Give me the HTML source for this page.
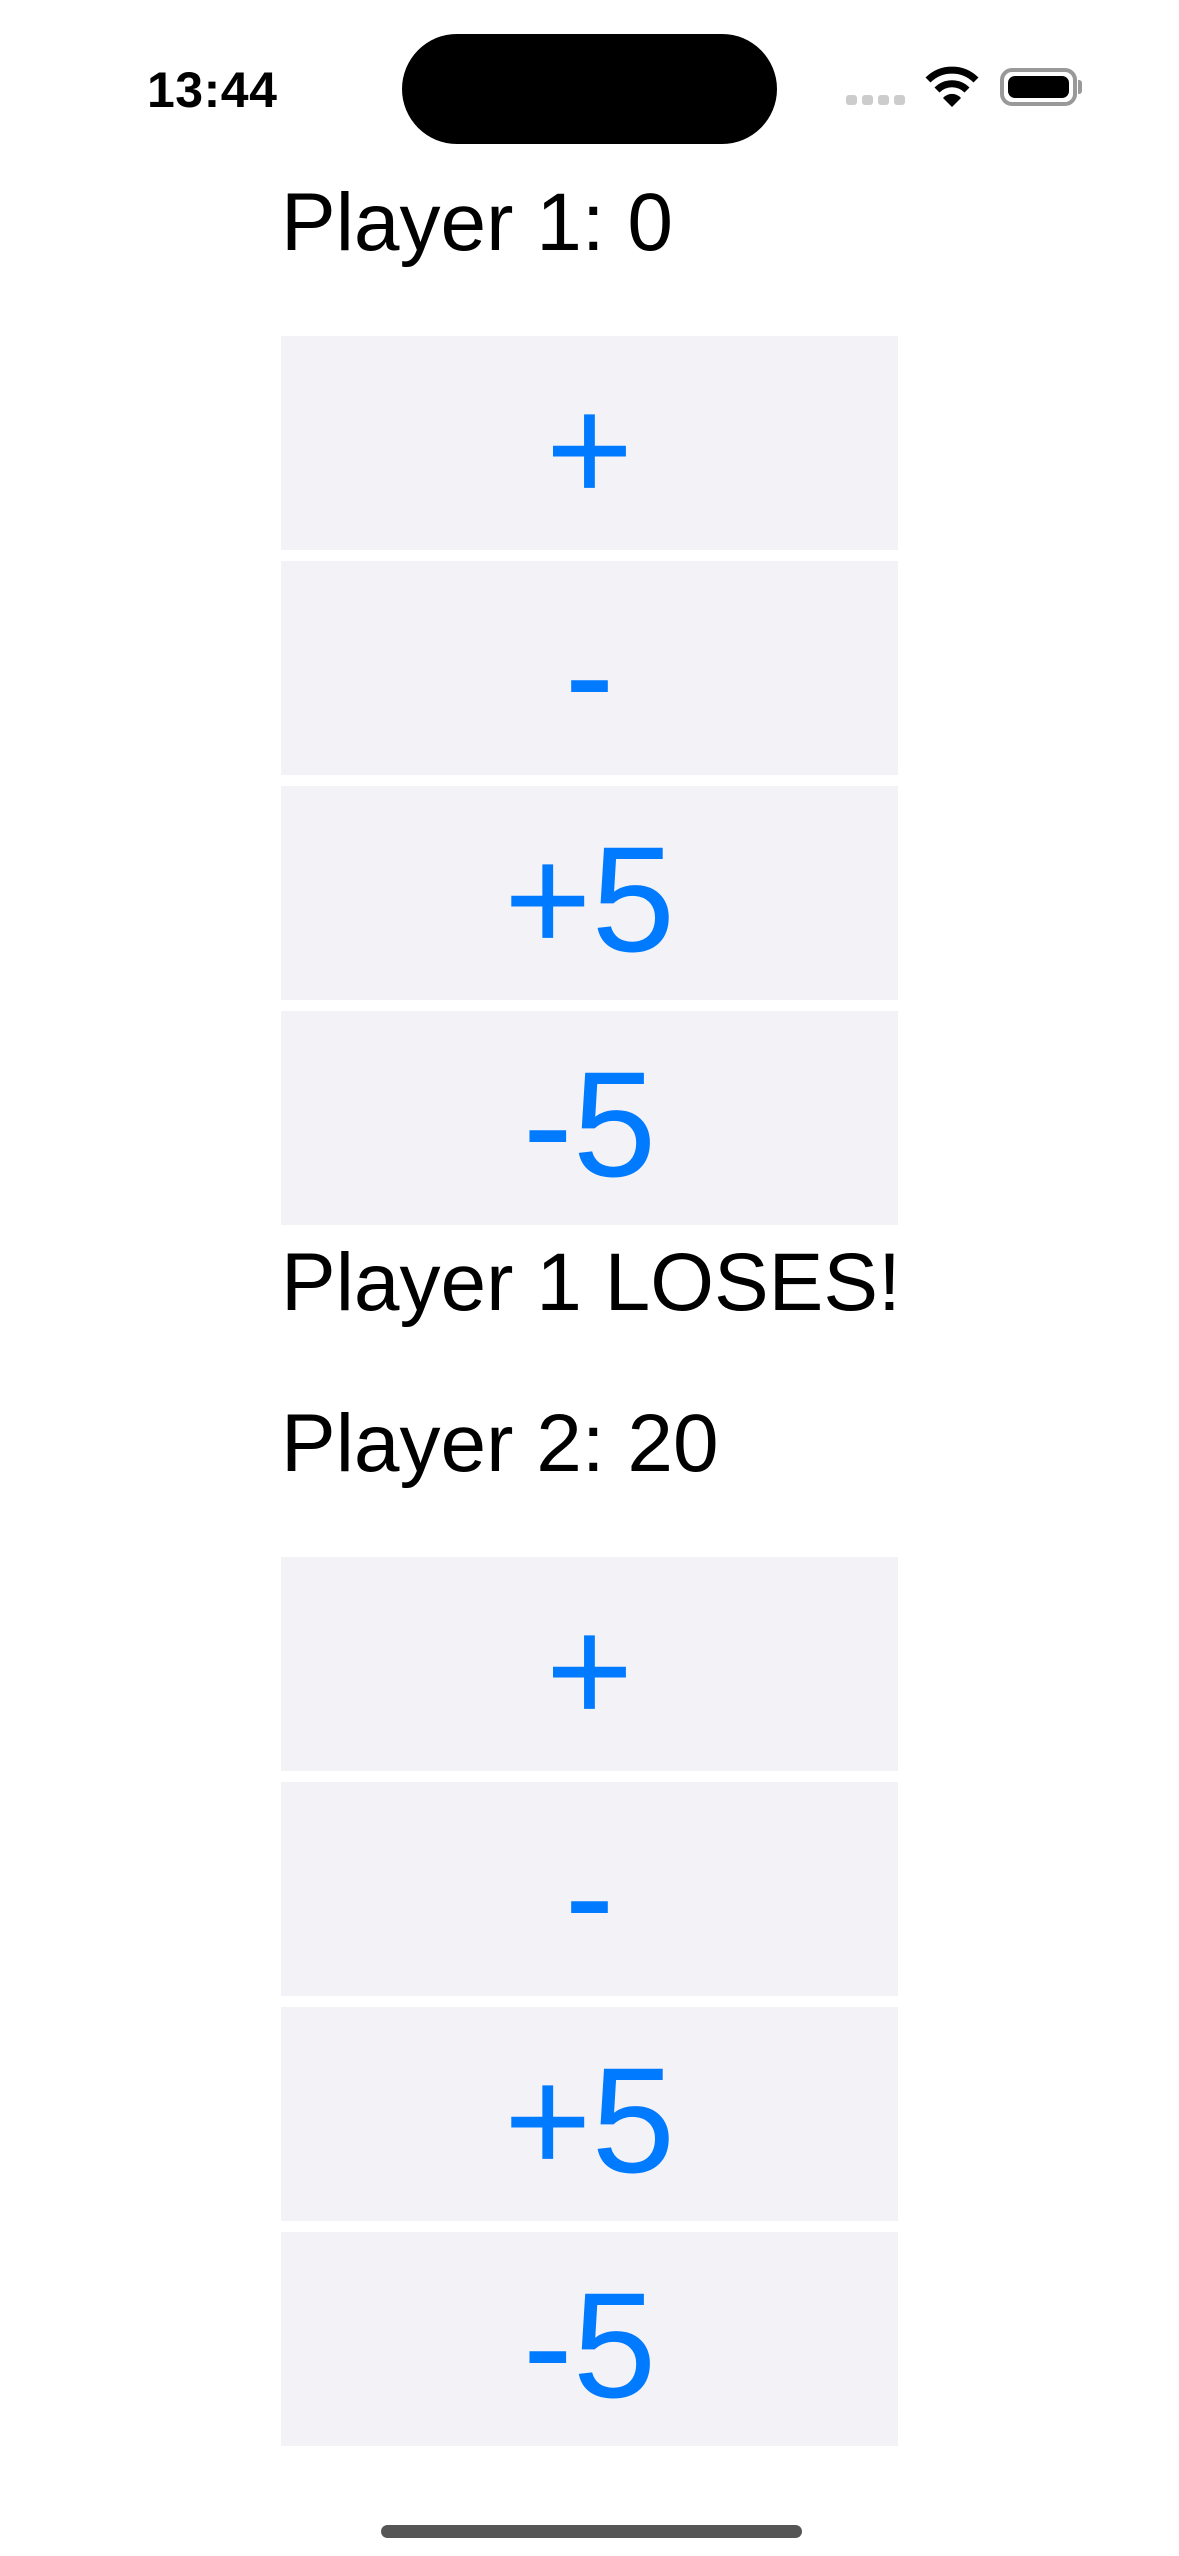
<!DOCTYPE html>
<html><head><meta charset="utf-8"><style>
*{margin:0;padding:0;box-sizing:border-box}
html,body{width:1179px;height:2556px;background:#fff;overflow:hidden;font-family:"Liberation Sans",sans-serif}
.a{position:absolute}
.btn{position:absolute;left:281px;width:617px;height:214px;background:#F2F2F7;color:#007AFF;font-size:150px;display:flex;align-items:center;justify-content:center;line-height:1;padding-top:12px}
.t{position:absolute;left:281px;font-size:82px;color:#000;line-height:1;white-space:nowrap}
</style></head><body>
<div class="a" style="left:147px;top:61px;font-size:50px;font-weight:bold;letter-spacing:0.5px">13:44</div>
<div class="a" style="left:402px;top:34px;width:375px;height:110px;background:#000;border-radius:55px"></div>
<div class="a" style="left:846px;top:95px;width:11px;height:10px;background:#ccc;border-radius:3px"></div>
<div class="a" style="left:862px;top:95px;width:11px;height:10px;background:#ccc;border-radius:3px"></div>
<div class="a" style="left:878px;top:95px;width:11px;height:10px;background:#ccc;border-radius:3px"></div>
<div class="a" style="left:894px;top:95px;width:11px;height:10px;background:#ccc;border-radius:3px"></div>
<svg class="a" style="left:925px;top:66px" width="54" height="42" viewBox="0 0 54 42">
<path d="M3 14 A34 34 0 0 1 51 14" stroke="#000" stroke-width="7" fill="none"/>
<path d="M12 24 A21 21 0 0 1 42 24" stroke="#000" stroke-width="7" fill="none"/>
<path d="M18 32 L27 41 L36 32 A12 12 0 0 0 18 32Z" fill="#000"/>
</svg>
<div class="a" style="left:1000px;top:68px;width:77px;height:38px;border:4px solid #999;border-radius:12px;padding:4px"><div style="width:100%;height:100%;background:#000;border-radius:7px"></div></div>
<div class="a" style="left:1078px;top:80px;width:4px;height:14px;background:#999;border-radius:0 3px 3px 0"></div>

<div class="t" style="top:182px">Player 1: 0</div>
<div class="btn" style="top:336px">+</div>
<div class="btn" style="top:561px">-</div>
<div class="btn" style="top:786px">+5</div>
<div class="btn" style="top:1011px">-5</div>
<div class="t" style="top:1242px">Player 1 LOSES!</div>
<div class="t" style="top:1403px">Player 2: 20</div>
<div class="btn" style="top:1557px">+</div>
<div class="btn" style="top:1782px">-</div>
<div class="btn" style="top:2007px">+5</div>
<div class="btn" style="top:2232px">-5</div>
<div class="a" style="left:381px;top:2525px;width:421px;height:13px;background:#555;border-radius:7px"></div>
</body></html>
